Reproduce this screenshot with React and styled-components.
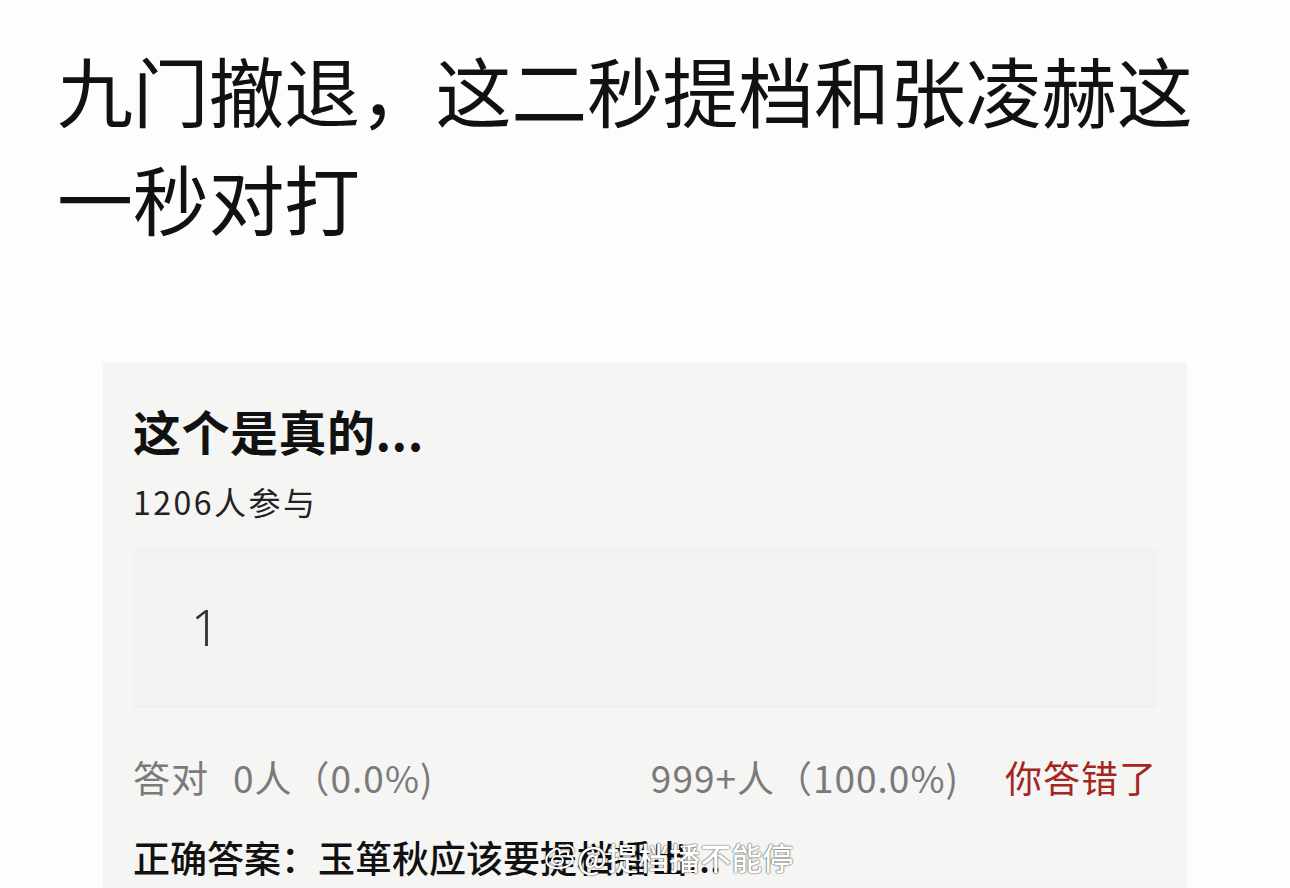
import React from "react";
import styled, { createGlobalStyle } from "styled-components";

const GlobalStyle = createGlobalStyle`
  html, body {
    margin: 0;
    padding: 0;
    background: #fdfdfd;
  }
  body {
    font-family: "Noto Sans CJK SC", "Noto Sans", sans-serif;
    overflow: hidden;
  }
`;

const Page = styled.div`
  width: 1290px;
  height: 888px;
  overflow: hidden;
  padding: 35px 0 0 57px;
  box-sizing: border-box;
`;

const Headline = styled.h1`
  margin: 0;
  width: 1160px;
  font-size: 76px;
  line-height: 108px;
  font-weight: 400;
  color: #111;
  letter-spacing: -0.3px;
`;

const Card = styled.div`
  position: relative;
  margin: 111px 0 0 46px;
  width: 1084px;
  background: #f5f5f4;
  padding: 38px 30px 40px 30px;
  box-sizing: border-box;
  display: flex;
  flex-direction: column;
`;

const CardTitle = styled.div`
  font-size: 48px;
  line-height: 60px;
  font-weight: 700;
  color: #111;
  letter-spacing: 0.5px;
`;

const Joined = styled.div`
  margin-top: 19px;
  font-size: 32px;
  line-height: 44px;
  color: #222;
  letter-spacing: 2.5px;
`;

const Option = styled.div`
  margin-top: 25px;
  height: 158px;
  background: #f2f2f0;
  border-bottom: 1px solid #ecece9;
  display: flex;
  align-items: center;
  padding-left: 58px;
  font-family: "Noto Sans", sans-serif;
  font-size: 50px;
  font-weight: 300;
  color: #333;
`;

const StatRow = styled.div`
  margin-top: 45px;
  display: flex;
  align-items: center;
  font-size: 37px;
  line-height: 50px;
  color: #7a7a7a;
  letter-spacing: 1px;
`;

const Stat = styled.span`
  margin-right: ${({ $gap }) => $gap || 0}px;
`;

const Spacer = styled.div`
  flex: 1;
`;

const Verdict = styled.span`
  color: #a3261f;
  letter-spacing: 1px;
`;

const Answer = styled.div`
  position: relative;
  margin-top: 29px;
  font-size: 37px;
  line-height: 52px;
  font-weight: 500;
  color: #111;
  white-space: nowrap;
`;

const Watermark = styled.div`
  position: absolute;
  left: 410px;
  top: 0;
  display: flex;
  align-items: center;
  gap: 0;
  font-size: 31px;
  line-height: 52px;
  font-weight: 500;
  color: #fff;
  text-shadow: 0 0 2px rgba(0, 0, 0, 0.6), 0 0 1px rgba(0, 0, 0, 0.7);
`;

const WeiboMark = () => (
  <svg width="34" height="32" viewBox="0 0 40 36" style={{ filter: "drop-shadow(0 0 1px rgba(0,0,0,0.6))" }}>
    <path
      d="M16 8c-7 3-13 9-12 15 1 6 9 9 17 8 8-1 14-5 14-10 0-3-3-4-6-4 1-2 1-4 0-5-2-2-7 0-9 2 0-3-1-6-4-6z"
      fill="none"
      stroke="#fff"
      strokeWidth="2.4"
    />
    <ellipse cx="17" cy="22" rx="6.5" ry="5" fill="none" stroke="#fff" strokeWidth="2.2" />
    <circle cx="16" cy="23" r="1.8" fill="#fff" />
    <path d="M28 4c4 0 8 3 8 8" fill="none" stroke="#fff" strokeWidth="2.2" strokeLinecap="round" />
  </svg>
);

export default function App() {
  return (
    <>
      <GlobalStyle />
      <Page>
        <Headline>
          九门撤退，这二秒提档和张凌赫这
          <br />
          一秒对打
        </Headline>
        <Card>
          <CardTitle>这个是真的...</CardTitle>
          <Joined>1206人参与</Joined>
          <Option>1</Option>
          <StatRow>
            <Stat $gap={24}>答对</Stat>
            <Stat>0人（0.0%)</Stat>
            <Spacer />
            <Stat $gap={46}>999+人（100.0%)</Stat>
            <Verdict>你答错了</Verdict>
          </StatRow>
          <Answer>
            正确答案：玉箪秋应该要提档播出...
            <Watermark>
              <WeiboMark />
              <span>@提档播不能停</span>
            </Watermark>
          </Answer>
        </Card>
      </Page>
    </>
  );
}
